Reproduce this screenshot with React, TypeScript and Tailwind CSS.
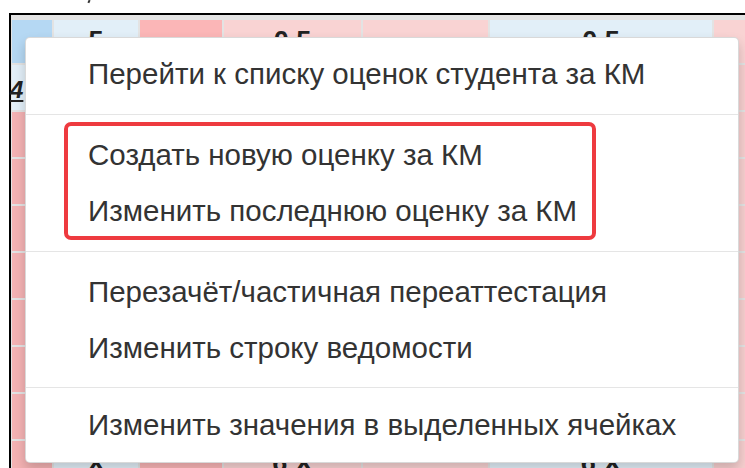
import React from "react";

// ── Grade sheet behind the menu ───────────────────────────────────────────────

const HEAD = ["bg-[#b5d8f3]", "bg-[#e2eff8]", "bg-[#fbb6b7]", "bg-[#f9d3d3]", "bg-[#f9d3d3]", "bg-[#e2eff8]", "bg-[#f9d3d3]"];
const BODY = ["bg-[#f4b2b3]", "bg-[#e2eff8]", "bg-[#fbb6b7]", "bg-[#f9d3d3]", "bg-[#f9d3d3]", "bg-[#e2eff8]", "bg-[#f7cfcf]"];

const HEAD_TEXT = ["", "5", "", "0,5", "", "0,5", ""];
const LAST_TEXT = ["", "Х", "", "6 Х", "", "6 Х", ""];

function Cell({ bg, text, h }: { bg: string; text?: string; h: string }) {
  return (
    <div className={`${bg} ${h} flex items-center justify-center text-[27px] font-bold text-[#222]`}>
      {text}
    </div>
  );
}

function Sheet() {
  const rows = 8;
  return (
    <div className="grid grid-cols-[40px_84px_82px_137px_125px_222px_1fr] gap-[2px] pl-[1px]">
      {HEAD.map((bg, i) => (
        <Cell key={`h${i}`} bg={bg} text={HEAD_TEXT[i]} h="h-[43px]" />
      ))}
      {BODY.map((bg, i) =>
        i === 0 ? (
          <div key="r0" className="flex h-[45px] items-center bg-[#e2eff8] pt-[4px]">
            <span className="-ml-[2px] text-[24px] font-bold italic underline text-[#222]">4</span>
          </div>
        ) : (
          <Cell key={`r0${i}`} bg={bg} h="h-[45px]" />
        ),
      )}
      {Array.from({ length: rows }).map((_, r) =>
        BODY.map((bg, i) => (
          <Cell
            key={`r${r + 1}-${i}`}
            bg={bg}
            h="h-[45px]"
            text={r === rows - 1 ? LAST_TEXT[i] : undefined}
          />
        )),
      )}
    </div>
  );
}

// ── Context menu ──────────────────────────────────────────────────────────────

const GROUPS = [
  ["Перейти к списку оценок студента за КМ"],
  ["Создать новую оценку за КМ", "Изменить последнюю оценку за КМ"],
  ["Перезачёт/частичная переаттестация", "Изменить строку ведомости"],
  ["Изменить значения в выделенных ячейках"],
];

function ContextMenu() {
  return (
    <div className="absolute left-[25px] top-[37px] h-[426px] w-[714px] overflow-hidden rounded-[5px] border border-black/15 bg-white pt-[8px] shadow-[0_6px_12px_rgba(0,0,0,0.18)]">
      {GROUPS.map((group, g) => (
        <div key={g}>
          {g > 0 && (
            <div className={g === 3 ? "mt-[11px] mb-[9px] h-px bg-[#e5e5e5]" : "my-[12px] h-px bg-[#e5e5e5]"} />
          )}
          {group.map((label) => (
            <div key={label} className="h-[56px] whitespace-nowrap pl-[62px] text-[29.5px] leading-[56px] text-[#333]">
              {label}
            </div>
          ))}
        </div>
      ))}
      {/* highlight frame around the two grade actions */}
      <div className="pointer-events-none absolute left-[38px] top-[84px] h-[118px] w-[532px] rounded-[7px] border-[4px] border-[#ee3a3f]" />
    </div>
  );
}

export default function App() {
  return (
    <div className="relative h-[468px] w-[745px] overflow-hidden bg-white font-['Liberation_Sans',Arial,sans-serif]">
      <div className="h-[13px] pl-[88px]">
        <div className="h-[3px] w-[2px] rotate-[25deg] bg-[#333]" />
      </div>
      <div className="ml-[9px] h-full border-t-2 border-l-2 border-black bg-[#e3e3e3] pt-[5px]">
        <Sheet />
      </div>
      <ContextMenu />
    </div>
  );
}
